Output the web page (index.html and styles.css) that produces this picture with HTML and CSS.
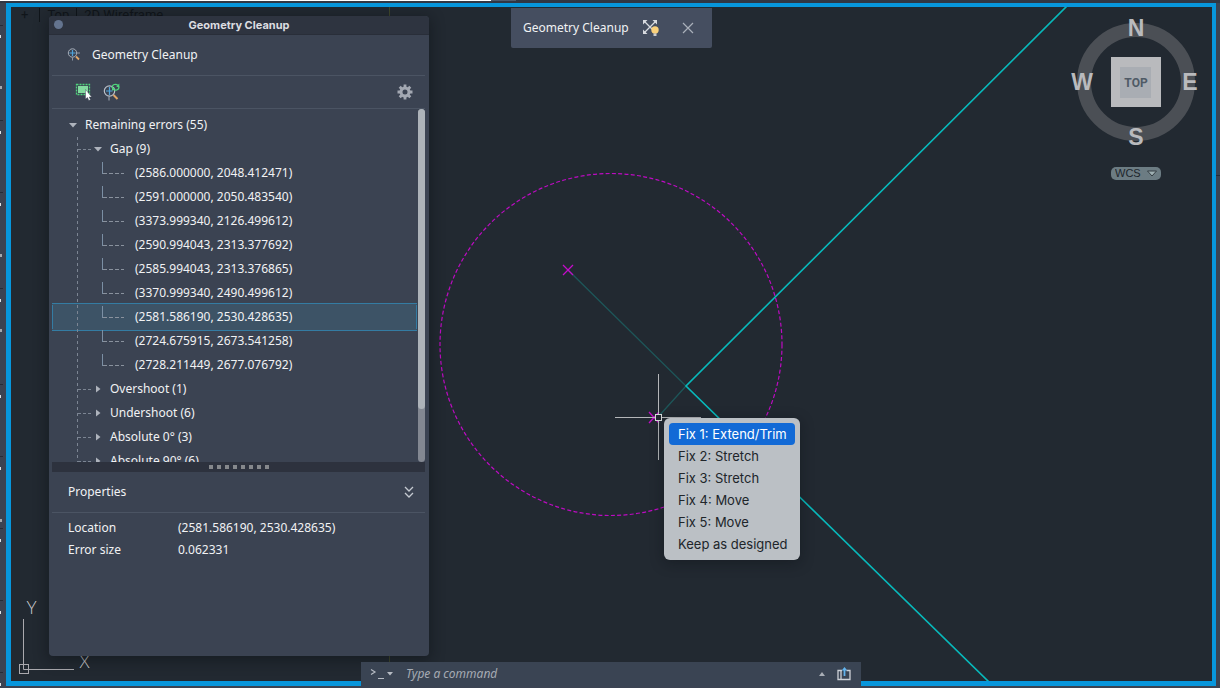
FILE: index.html
```html
<!DOCTYPE html>
<html lang="en">
<head>
<meta charset="utf-8">
<title>Geometry Cleanup</title>
<link rel="stylesheet" href="styles.css">
</head>
<body>
<div class="app">
  <div class="topstrip"><span class="tab-white"></span><span class="tab-active"></span></div>
  <svg class="leftstrip" width="3" height="688" aria-hidden="true">
    <path d="M0 25.5h3M0 120.5h3M0 192.500h3M0 288.500h3M0 384.500h3M0 456.500h3M0 528.500h3M0 600.500h3M0 672.500h3" stroke="#262c37"/>
    <path d="M0 36.500h1M0 132.500h1M0 204.500h1M0 300.500h1M0 396.500h1M0 468.500h1M0 540.500h1M0 612.500h1M0 684.500h1" stroke="#dfe2e5" stroke-width="3"/>
    <path d="M0 87.500h2M0 255.500h2M0 330.500h2M0 520.500h2" stroke="#a5a8ad" stroke-width="3"/>
  </svg>
  <main class="canvas">
    <svg class="drawing" viewBox="11 7 1201 674" preserveAspectRatio="xMinYMin slice" aria-hidden="true">
      <path d="M389.500 7V681" stroke="#41492c"/>
      <circle cx="611" cy="344.500" r="171" fill="none" stroke="#bd0bc2" stroke-width="1.2" stroke-dasharray="4 2.300"/>
      <path d="M568 270L686 386L658 417" fill="none" stroke="#1d5659" stroke-width="1.300"/>
      <path d="M1067 6L686 386L989 682" fill="none" stroke="#08b9bb" stroke-width="1.600"/>
      <path d="M563 265l10 10M573 265l-10 10M649 412l10 11M659 412l-10 11" stroke="#c40bc9" stroke-width="1.300"/>
      <path d="M658.500 374V414M658.500 421V460M615 417.500H655M662 417.500H701" stroke="#b4b6b9"/>
      <rect x="655.500" y="414.500" width="6" height="6" fill="#222931" stroke="#d8dadb"/>
      <path d="M23.500 619V669.500H74" fill="none" stroke="#aaa9ae"/>
      <rect x="19.500" y="664.500" width="9" height="9" fill="none" stroke="#aaa9ae"/>
      <text class="axis" x="31.500" y="614">Y</text>
      <text class="axis" x="84.500" y="668">X</text>
    </svg>

    <div class="viewlabels"><span>+</span><i></i><span>Top</span><i></i><span>2D Wireframe</span></div>

    <section class="toolpanel" aria-label="Active tool">
      <span>Geometry Cleanup</span>
      <button type="button" aria-label="Automatic fix">
        <svg width="18" height="18" viewBox="0 0 18 18"><path d="M2 2L14 14M14 2L2 14" stroke="#d8dbe0" stroke-width="1.300"/><path d="M1 1h4.500L1 5.500zM15 1h-4.500l4.500 4.500zM1 15h4.500l-4.500-4.500z" fill="#d8dbe0"/><circle cx="13" cy="11" r="3.700" fill="#fad17b"/><path d="M11.500 14.500h3v2.500h-3z" fill="#c9cbd0"/></svg>
      </button>
      <button type="button" aria-label="Close">
        <svg width="12" height="12" viewBox="0 0 12 12"><path d="M1 1L11 11M11 1L1 11" stroke="#aab0ba" stroke-width="1.200"/></svg>
      </button>
    </section>

    <section class="viewcube" aria-label="View cube">
      <svg width="132" height="140" viewBox="1070 12 132 140">
        <circle cx="1136" cy="82" r="52" fill="none" stroke="#4b4f55" stroke-width="14"/>
        <rect x="1111" y="57" width="50" height="50" fill="#b9babd"/>
        <rect x="1120" y="67" width="31" height="31" fill="#a9adb3"/>
        <text class="compass" x="1136" y="36">N</text>
        <text class="compass" x="1136" y="145">S</text>
        <text class="compass" x="1082" y="90">W</text>
        <text class="compass" x="1190" y="90">E</text>
        <text class="face" x="1136" y="87">TOP</text>
      </svg>
      <div class="wcs">
        <select aria-label="Coordinate system"><option>WCS</option></select>
        <svg width="10" height="7" viewBox="0 0 10 7"><path d="M.5 1h9L5 6z" fill="#9fb0b3" stroke="#343c42"/></svg>
      </div>
    </section>

    <section class="palette" aria-label="Geometry Cleanup">
      <header class="titlebar"><button type="button" class="dot" aria-label="Close palette"></button><h1>Geometry Cleanup</h1></header>
      <div class="content">
        <div class="heading">
          <svg width="14" height="14" viewBox="0 0 14 14"><circle cx="5.500" cy="5" r="4.200" fill="none" stroke="#a7afba"/><path d="M5.500 2v6M2.500 5h6" stroke="#4fa3da" stroke-width="1.200"/><path d="M10 5h3M5.500 9.500v3" stroke="#8d96a4"/><path d="M9 8.500l3 3" stroke="#e0a668" stroke-width="1.800"/></svg>
          <h2>Geometry Cleanup</h2>
        </div>
        <div class="toolbar">
          <button type="button" aria-label="Select objects"><svg width="18" height="18" viewBox="0 0 18 18"><rect x="1.500" y="1.500" width="13" height="10" fill="none" stroke="#4fd47c" stroke-width="1.300" stroke-dasharray="2 1"/><rect x="3" y="3" width="10" height="7" fill="#83db9f"/><path d="M10.500 6.500v9.500l2-1.500 1.300 3 1.700-.8-1.300-2.700h2.500z" fill="#fff" stroke="#36404e" stroke-width=".4"/></svg></button>
          <button type="button" aria-label="Rescan"><svg width="18" height="18" viewBox="0 0 18 18"><circle cx="6.500" cy="8" r="5.200" fill="none" stroke="#b8bfc8" stroke-width="1.200"/><path d="M6.500 4v8M3 8h6.500" stroke="#4fa3da" stroke-width="1.200"/><path d="M6 13.500v4" stroke="#a7afba"/><path d="M10.500 12l4 4" stroke="#e0a668" stroke-width="2"/><path d="M9 5c0-4 4-4.500 6-2.500M16 3.500c0 4-4 4.500-6 2.500" fill="none" stroke="#4fd47c" stroke-width="1.300"/><path d="M16.300 .5v3.500h-3.200zM9 8V4.800h3z" fill="#4fd47c"/></svg></button>
          <button type="button" class="gear" aria-label="Settings"><svg width="16" height="16" viewBox="0 0 16 16"><circle cx="8" cy="8" r="4" fill="none" stroke="#a3a8b2" stroke-width="3"/><path d="M8 .5v3M8 12.500v3M.5 8h3M12.500 8h3M2.700 2.700l2 2M11.300 11.300l2 2M2.700 13.300l2-2M11.300 4.700l2-2" stroke="#a3a8b2" stroke-width="2.800"/></svg></button>
        </div>
        <div class="treewrap">
          <ul class="tree">
            <li class="root"><svg class="arrow" viewBox="0 0 8 8"><path d="M0 2h8L4 6.500z"/></svg>Remaining errors (55)</li>
            <li class="group open"><svg class="arrow" viewBox="0 0 8 8"><path d="M0 2h8L4 6.500z"/></svg>Gap (9)</li>
            <li class="leaf">(2586.000000, 2048.412471)</li>
            <li class="leaf">(2591.000000, 2050.483540)</li>
            <li class="leaf">(3373.999340, 2126.499612)</li>
            <li class="leaf">(2590.994043, 2313.377692)</li>
            <li class="leaf">(2585.994043, 2313.376865)</li>
            <li class="leaf">(3370.999340, 2490.499612)</li>
            <li class="leaf selected">(2581.586190, 2530.428635)</li>
            <li class="leaf">(2724.675915, 2673.541258)</li>
            <li class="leaf">(2728.211449, 2677.076792)</li>
            <li class="group"><svg class="arrow" viewBox="0 0 8 8"><path d="M2 .5v7l4.500-3.500z"/></svg>Overshoot (1)</li>
            <li class="group"><svg class="arrow" viewBox="0 0 8 8"><path d="M2 .5v7l4.500-3.500z"/></svg>Undershoot (6)</li>
            <li class="group"><svg class="arrow" viewBox="0 0 8 8"><path d="M2 .5v7l4.500-3.500z"/></svg>Absolute 0° (3)</li>
            <li class="group"><svg class="arrow" viewBox="0 0 8 8"><path d="M2 .5v7l4.500-3.500z"/></svg>Absolute 90° (6)</li>
          </ul>
          <div class="scrollbar"><div class="thumb"></div></div>
        </div>
        <div class="splitter"><i></i><i></i><i></i><i></i><i></i><i></i><i></i><i></i></div>
        <div class="props-head"><h3>Properties</h3>
          <button type="button" aria-label="Collapse properties"><svg width="10" height="12" viewBox="0 0 10 12"><path d="M1 1l4 4 4-4M1 7l4 4 4-4" fill="none" stroke="#c5cad1" stroke-width="1.300"/></svg></button>
        </div>
        <dl class="props"><dt>Location</dt><dd>(2581.586190, 2530.428635)</dd><dt>Error size</dt><dd>0.062331</dd></dl>
      </div>
    </section>

    <div class="menu" role="menu">
      <button type="button" role="menuitem" class="on">Fix 1: Extend/Trim</button>
      <button type="button" role="menuitem">Fix 2: Stretch</button>
      <button type="button" role="menuitem">Fix 3: Stretch</button>
      <button type="button" role="menuitem">Fix 4: Move</button>
      <button type="button" role="menuitem">Fix 5: Move</button>
      <button type="button" role="menuitem">Keep as designed</button>
    </div>
  </main>

  <div class="command">
    <button type="button" aria-label="Recent commands"><svg width="24" height="12" viewBox="0 0 24 12"><path d="M1 1.500l4 2.500-4 2.500M8 10.500h6" fill="none" stroke="#b6bbc3" stroke-width="1.200"/><path d="M17 4h6l-3 3.500z" fill="#b6bbc3"/></svg></button>
    <input type="text" placeholder="Type a command" aria-label="Command">
    <button type="button" class="expand" aria-label="Expand history"><svg width="6" height="4" viewBox="0 0 6 4"><path d="M0 4h6L3 0z" fill="#a9aeb6"/></svg></button>
    <button type="button" aria-label="Undock"><svg width="14" height="14" viewBox="0 0 14 14"><path d="M5 3.500H1v9h12v-9H9.500M4 3.500v9" fill="none" stroke="#ccd0d6" stroke-width="1.300"/><path d="M7.500 9V3" stroke="#62b4ee" stroke-width="1.800"/><path d="M4.700 3.500h5.600L7.500 0z" fill="#62b4ee"/></svg></button>
  </div>
</div>
</body>
</html>
```
FILE: styles.css
```css
* { box-sizing: border-box; }
body { margin: 0; background: #3b4352; font: 12px/24px "Noto Sans", sans-serif; color: #f1f2f4; }
button, input, select { font: inherit; color: inherit; background: none; border: 0; padding: 0; margin: 0; }
button { display: flex; align-items: center; }
svg { display: block; flex: none; }
h1, h2, h3, ul, dl, dd { margin: 0; padding: 0; font-size: 12px; font-weight: 400; }

.app { position: relative; display: flex; flex-direction: column; height: 100vh; padding: 0 4px 2px 6px; overflow: hidden; }
.topstrip { display: flex; height: 3px; margin: 0 -4px 0 -6px; background: #303744; }
.tab-white { width: 491px; height: 1px; background: #fff; }
.tab-active { width: 25px; height: 1px; background: #505b6e; }
.leftstrip { position: absolute; left: 0; top: 0; }
.app::after { content: ""; position: absolute; right: 0; top: 175px; width: 4px; height: 1px; background: #252b36; }

.canvas { position: relative; flex: 1; min-height: 0; border: solid #0796dc; border-width: 4px 4px 5px 5px; background: #222931; overflow: hidden; }
.drawing { width: 100%; height: 100%; }
.axis { font: 300 17px Lato, sans-serif; fill: #d0d1d4; text-anchor: middle; }

.viewlabels { position: absolute; left: 10px; top: 0; display: flex; align-items: center; gap: 7px; height: 16px; font: 13px/16px Roboto, sans-serif; color: #10151a; }
.viewlabels i { width: 1px; height: 14px; background: #10151a; }
.viewlabels span:first-child { margin-right: 4px; }

.toolpanel { position: absolute; left: 500px; top: 1px; display: flex; align-items: center; width: 201px; height: 40px; padding: 0 18px 0 12px; background: #454e60; border-radius: 0 0 2px 2px; }
.toolpanel button:nth-of-type(1) { margin-left: auto; margin-right: 22px; }

.viewcube { position: absolute; right: 10px; top: 5px; display: flex; flex-direction: column; align-items: center; gap: 15px; }
.compass { font: bold 23px "Liberation Sans", sans-serif; fill: #b9babd; text-anchor: middle; }
.face { font: bold 12px Roboto, sans-serif; fill: #4f5a66; text-anchor: middle; }
.wcs { display: flex; align-items: center; width: 50px; height: 13px; padding: 0 4px; background: #6c7c83; border-radius: 5px; }
.wcs select { appearance: none; flex: 1; min-width: 0; height: 13px; font: 11px/13px "Liberation Sans", sans-serif; color: #1d252b; }

.palette { position: absolute; left: 38px; top: 9px; bottom: 25px; width: 380px; display: flex; flex-direction: column; background: #3b4352; border-radius: 4px; overflow: hidden; box-shadow: 0 3px 14px 2px rgba(10, 15, 20, .45); }
.titlebar { position: relative; display: flex; align-items: center; justify-content: center; height: 19px; flex: none; background: #2e3440; border-bottom: 1px solid #292e39; }
.titlebar h1 { font: bold 11px/18px Inter, sans-serif; color: #dcdde0; }
.dot { position: absolute; left: 5px; top: 4px; width: 9px; height: 9px; border-radius: 50%; background: #64748f; }
.content { display: flex; flex-direction: column; flex: 1; min-height: 0; padding: 0 4px 0 3px; }
.heading { display: flex; align-items: center; gap: 11px; height: 41px; flex: none; padding-left: 15px; border-bottom: 1px solid #4b5463; }
.toolbar { display: flex; align-items: center; gap: 10px; height: 33px; flex: none; padding: 0 12px 0 23px; border-bottom: 1px solid #4b5463; }
.gear { margin-left: auto; }

.treewrap { display: flex; gap: 1px; height: 353px; flex: none; overflow: hidden; }
.tree { position: relative; flex: 1; padding-top: 4px; list-style: none; height: 353px; overflow: hidden; }
.tree::before { content: ""; position: absolute; left: 25px; top: 28px; bottom: 0; width: 1px; background: repeating-linear-gradient(#7c8593 0 3px, transparent 3px 6px); z-index: 1; }
.tree li { position: relative; display: flex; align-items: center; height: 24px; }
.arrow { width: 8px; height: 8px; fill: #aeb3bc; }
.root { padding-left: 17px; gap: 8px; }
.group { padding-left: 42px; gap: 8px; }
.group::before { content: ""; position: absolute; left: 26px; top: 12px; width: 13px; height: 1px; background: repeating-linear-gradient(90deg, #7c8593 0 3px, transparent 3px 5px); }
.leaf { padding-left: 83px; }
.leaf::before { content: ""; position: absolute; left: 50px; top: 1px; width: 1px; height: 12px; background: #7b8fa4; }
.leaf::after { content: ""; position: absolute; left: 51px; top: 12px; width: 21px; height: 1px; background: repeating-linear-gradient(90deg, #8a929e 0 4px, transparent 4px 6px); }
.selected { background: #3d5366; box-shadow: 0 0 0 1px #3d5366, inset 1px 0 #347ca3, inset -1px 0 #347ca3, 0 2px #347ca3, 0 -2px #347ca3; }
.scrollbar { width: 7px; height: 353px; background: #838892; border-radius: 4px; }
.thumb { height: 300px; background: #adb3b9; border-radius: 4px; }
.splitter { display: flex; align-items: center; justify-content: center; gap: 4px; height: 10px; flex: none; background: #2d323e; }
.splitter i { width: 4px; height: 4px; background: #85888c; }
.props-head { display: flex; align-items: center; justify-content: space-between; height: 41px; flex: none; padding: 0 11px 0 16px; border-bottom: 1px solid #4b5463; }
.props { display: grid; grid-template-columns: 110px 1fr; padding: 4px 16px; line-height: 22px; }

.menu { position: absolute; left: 653px; top: 411px; width: 136px; padding: 5px; background: #bbc0c5; border-radius: 6px; box-shadow: 0 3px 14px rgba(10, 15, 20, .4); font: 13px/22px Inter, sans-serif; color: #20252a; }
.menu button { width: 100%; height: 22px; padding-left: 9px; border-radius: 4px; white-space: nowrap; }
.menu .on { background: #126ad6; color: #fff; }

.command { position: absolute; left: 361px; bottom: 2px; width: 500px; height: 24px; display: flex; align-items: center; gap: 12px; padding: 0 10px 0 9px; background: #3a4453; }
.command input { flex: 1; min-width: 0; font-style: italic; }
.command input::placeholder { color: #a6abb3; opacity: 1; }
```
